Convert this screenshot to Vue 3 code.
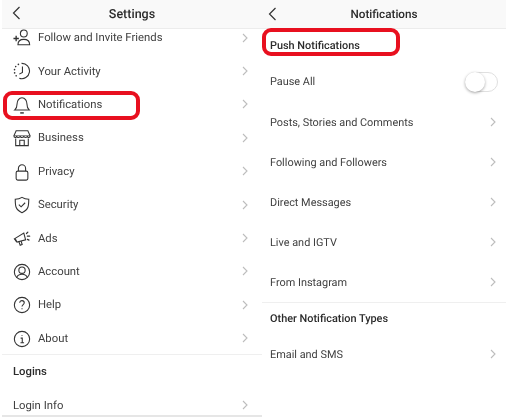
<template>
  <div class="page">
    <section class="panel left">
      <header class="top">
        <svg class="back" viewBox="0 0 12 16"><path d="M9.5 2 3.500 8l6 6" /></svg>
        <h1>Settings</h1>
      </header>
      <div class="list">
        <div v-for="item in settings" :key="item.label" class="row">
          <svg class="icon" viewBox="0 0 20 20" v-html="item.icon"></svg>
          <span>{{ item.label }}</span>
          <svg class="chev" viewBox="0 0 6 10"><path d="M1 1l4 4-4 4" /></svg>
          <div v-if="item.label === 'Notifications'" class="mark"></div>
        </div>
      </div>
      <div class="logins">
        <div class="heading">Logins</div>
        <div class="row plain">
          <span>Login Info</span>
          <svg class="chev" viewBox="0 0 6 10"><path d="M1 1l4 4-4 4" /></svg>
        </div>
      </div>
      <div class="tabbar"></div>
    </section>

    <section class="panel right">
      <header class="top">
        <svg class="back" viewBox="0 0 12 16"><path d="M9.5 2 3.500 8l6 6" /></svg>
        <h1>Notifications</h1>
      </header>
      <div class="push">
        <b>Push Notifications</b>
        <div class="mark"></div>
      </div>
      <div class="line pause">
        <span>Pause All</span>
        <div class="switch"><i></i></div>
      </div>
      <div v-for="name in pushItems" :key="name" class="line">
        <span>{{ name }}</span>
        <svg class="chev" viewBox="0 0 6 10"><path d="M1 1l4 4-4 4" /></svg>
      </div>
      <div class="other">
        <b>Other Notification Types</b>
      </div>
      <div class="line">
        <span>Email and SMS</span>
        <svg class="chev" viewBox="0 0 6 10"><path d="M1 1l4 4-4 4" /></svg>
      </div>
    </section>
  </div>
</template>

<script setup>
const settings = [
  { label: 'Follow and Invite Friends', icon: '<path d="M.5 10.500h6M3.500 7.500v6" stroke-width="1.500"/><circle cx="12" cy="5" r="3.800"/><path d="M5.500 17.500c0-4 2.500-6 6.500-6s6.500 2 6.500 6z"/>' },
  { label: 'Your Activity', icon: '<path d="M9.500 1.500a8.500 8.500 0 1 1-2.500 16.500"/><path d="M10.500 5v6.500L7 13.500"/><path d="M6 2.600v.1M3 5v.1M1.700 8.500v.1M1.800 12v.1M3.500 15.300v.1" stroke-linecap="round" stroke-width="1.800"/>' },
  { label: 'Notifications', icon: '<path d="M2 15.500h16c-1.800-1.500-2.500-3-2.500-6.500 0-3.800-2.300-7-5.500-7S4.500 5.200 4.500 9c0 3.500-.7 5-2.500 6.500z"/><path d="M8 18.800h4" stroke-width="1.600"/>' },
  { label: 'Business', icon: '<path d="M3.500 2h13l2.500 5.500c0 2.500-3 2.500-3 .2 0 2.300-4 2.300-4 0 0 2.300-4 2.300-4 0 0 2.300-4 2.300-4 0 0 2.300-3 2.300-3-.2z"/><path d="M1 7.500h18" stroke-width=".8"/><path d="M3 10.500v8h14v-8M7.500 18.500v-6h5v6"/>' },
  { label: 'Privacy', icon: '<rect x="3.500" y="9" width="13" height="10" rx="1.800"/><path d="M6 9V6a4 4 0 0 1 8 0v3"/>' },
  { label: 'Security', icon: '<path d="M10 1.500c2.500 1.500 4.500 2 7.500 2.200 0 7 0 11.500-7.500 14.800C2.500 15.200 2.500 10.700 2.500 3.700c3-.2 5-.7 7.500-2.200z"/><path d="m6.500 9.500 2.500 2.500 4.500-4.500"/>' },
  { label: 'Ads', icon: '<path d="M1.500 11 12 4.500l2 7.500-9.500 2.500z"/><path d="M2.500 10.500l1.500 4"/><path d="m6.500 14 1.500 4 2.200-.8-1.200-3.800"/><path d="M15 5l1.500-1.500M16 8h2.500M16 11.500l1.800.8" stroke-linecap="round" stroke-width="1.400"/>' },
  { label: 'Account', icon: '<circle cx="10" cy="10" r="8.500"/><circle cx="10" cy="8" r="3.500"/><path d="M4 16.200c1-2.700 3-3.700 6-3.700s5 1 6 3.700"/>' },
  { label: 'Help', icon: '<circle cx="10" cy="10" r="8.500"/><path d="M7.500 7.500c0-3.200 5-3.200 5 0 0 2-2.500 2-2.500 4.200M10 13.600v1"/>' },
  { label: 'About', icon: '<circle cx="10" cy="10" r="8.500"/><path d="M8.500 9H10.300v5M8.300 14.200h4M10 5.500v1"/>' }
]

const pushItems = [
  'Posts, Stories and Comments',
  'Following and Followers',
  'Direct Messages',
  'Live and IGTV',
  'From Instagram'
]
</script>

<style>
html, body { background: #fff; }
</style>

<style scoped>
.page {
  display: flex;
  width: 508px;
  height: 417px;
  overflow: hidden;
  background: #fff;
  color: #404040;
  font-family: "Roboto", "Liberation Sans", sans-serif;
  font-size: 11.3px;
  text-rendering: geometricPrecision;
  filter: blur(0.3px);
}
.panel {
  display: flex;
  flex-direction: column;
  height: 417px;
}
.left {
  width: 260px;
  margin-left: 2px;
}
.right {
  width: 244px;
  font-size: 10.9px;
}
.top {
  display: flex;
  align-items: center;
  justify-content: center;
  flex: none;
  position: relative;
  height: 28px;
  background: #f9f9f9;
  border-bottom: 1px solid #ececec;
}
.top h1 {
  margin: 0;
  font-size: 12.5px;
  font-weight: 500;
  color: #2b2b2b;
}
.right .top h1 {
  font-size: 11.7px;
}
.back {
  position: absolute;
  left: 8px;
  top: 5px;
  width: 12px;
  height: 16px;
  fill: none;
  stroke: #333;
  stroke-width: 1.2;
}
.right .back {
  left: 4px;
  top: 6px;
}
.list {
  flex: none;
  height: 325px;
  overflow: hidden;
}
.row {
  position: relative;
  display: flex;
  align-items: center;
  flex: none;
  box-sizing: border-box;
  height: 33.4px;
  padding: 0 14px 0 36px;
}
.row:first-child {
  margin-top: -8px;
}
.row span,
.line span {
  flex: 1;
}
.icon {
  position: absolute;
  left: 11px;
  top: 8px;
  width: 18px;
  height: 18px;
  fill: none;
  stroke: #333;
  stroke-width: 1.2;
}
.chev {
  flex: none;
  width: 6px;
  height: 10px;
  fill: none;
  stroke: #bdbdbd;
  stroke-width: 1.1;
}
.mark {
  position: absolute;
  box-sizing: border-box;
  border: 4px solid #e8101f;
  border-radius: 9px;
}
.row .mark {
  left: 1px;
  top: 3px;
  width: 137px;
  height: 29px;
}
.logins {
  flex: none;
  border-top: 1px solid #efefef;
}
.heading {
  display: flex;
  align-items: center;
  height: 33px;
  padding-left: 11px;
  font-weight: 500;
  color: #2b2b2b;
}
.row.plain {
  height: 27px;
  margin-top: 0;
  padding-top: 7px;
  padding-left: 11px;
}
.tabbar {
  flex: 1;
  background: #e6e6e6;
}
.push {
  position: relative;
  display: flex;
  align-items: center;
  flex: none;
  height: 32px;
  padding-left: 8px;
  color: #2b2b2b;
}
.push b,
.other b {
  font-weight: 500;
}
.push .mark {
  left: 0;
  top: -1px;
  width: 138px;
  height: 28px;
}
.line {
  display: flex;
  align-items: center;
  flex: none;
  height: 40px;
  padding: 0 10px 0 8px;
}
.pause {
  height: 41px;
  padding-right: 8px;
}
.switch {
  position: relative;
  width: 33px;
  height: 20px;
  box-sizing: border-box;
  border: 1px solid #e0e0e0;
  border-radius: 10px;
}
.switch i {
  position: absolute;
  left: -1px;
  top: -1px;
  width: 20px;
  height: 20px;
  border-radius: 50%;
  background: #fff;
  box-shadow: 0 1px 3px rgba(0, 0, 0, 0.35);
}
.other {
  display: flex;
  align-items: center;
  flex: none;
  height: 31px;
  padding-left: 8px;
  border-top: 1px solid #efefef;
  color: #2b2b2b;
}
</style>
